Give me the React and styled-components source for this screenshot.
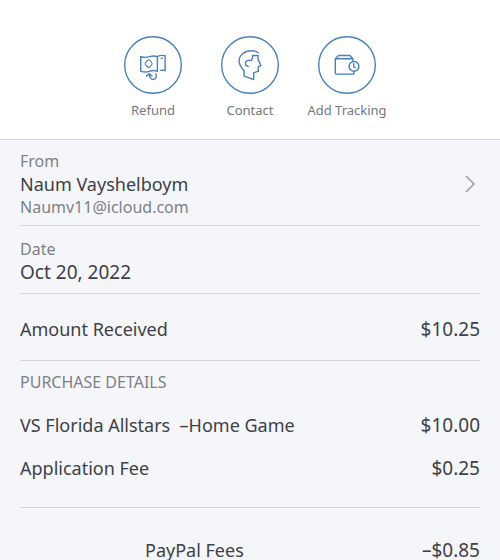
import styled, { createGlobalStyle } from "styled-components";

const GlobalStyle = createGlobalStyle`
  * {
    box-sizing: border-box;
  }

  body {
    margin: 0;
    background: #f5f6fa;
    color: #3e4147;
    font-family: "Noto Sans", "Open Sans", sans-serif;
    font-size: 18px;
    line-height: 24px;
  }
`;

const ActionBar = styled.header`
  display: flex;
  justify-content: center;
  padding: 36px 16px 19px;
  background: #fff;
  border-bottom: 1px solid #cfd3d8;
`;

const ActionButton = styled.button`
  display: flex;
  flex-direction: column;
  align-items: center;
  gap: 6px;
  width: 97px;
  padding: 0;
  border: none;
  background: none;
  color: #75787c;
  font: inherit;
  font-size: 13px;
  line-height: 20px;
  white-space: nowrap;
  cursor: pointer;
`;

const ActionIcon = styled.svg`
  width: 58px;
  height: 58px;
  fill: none;
  stroke: #4a80b8;
  stroke-width: 1.4;
  stroke-linejoin: round;
  stroke-linecap: round;
`;

const Details = styled.main`
  padding: 0 20px;
`;

const Section = styled.section`
  padding: ${({ $padding }) => $padding};
  border-bottom: ${({ $last }) => ($last ? "none" : "1px solid #d3d6db")};
`;

const ContactLink = styled.a`
  display: flex;
  align-items: center;
  justify-content: space-between;
  color: inherit;
  text-decoration: none;
`;

const Label = styled.div`
  color: #7e8185;
  font-size: 16px;
  line-height: 22px;
`;

const SectionTitle = styled.h2`
  margin: 0 0 20px;
  color: #7e8185;
  font-size: 16px;
  font-weight: 400;
  line-height: 22px;
`;

const Chevron = styled.svg`
  width: 20px;
  height: 20px;
  fill: none;
  stroke: #9b9da1;
  stroke-width: 1.5;
`;

const Items = styled.div`
  display: flex;
  flex-direction: column;
  gap: 19px;
`;

const Row = styled.div`
  display: flex;
  justify-content: space-between;
  white-space: pre-wrap;
`;

const FeeRow = styled(Row)`
  padding-left: 125px;
`;

const Figure = styled.span`
  font-size: 19px;
`;

function RefundIcon() {
  return (
    <ActionIcon viewBox="0 0 58 58" aria-hidden="true">
      <circle cx="29" cy="29" r="28.3" />
      <path d="M16.700 20.500c3 1.200 5.800 1.200 8.600.2s5.600-1 8.100 0v14.600c-2.700-1-5.400-1-8.100 0s-5.700 1-8.600-.2z" />
      <path
        d="M23.700 24.200q1-.8 2 0l2 2.300q.8 1.200 0 2.300l-2 2.200q-1 .8-2 0l-2.200-2.200q-.8-1.100 0-2.300z"
        strokeWidth="1.1"
      />
      <path d="M33.600 20.300c2.400-1.100 4.900-1.200 7.500-.6v15c-1.500-.5-2.900-.6-4.300-.3M37.300 22.300h.9" />
      <path d="M31.800 37.800c1.200 2.800.1 5.400-2.200 5.700-2.300.3-4.200-2-4.400-5.500M22.500 40.200l2.700-2.500 2.800 2.300" />
    </ActionIcon>
  );
}

function ContactIcon() {
  return (
    <ActionIcon viewBox="0 0 58 58" aria-hidden="true">
      <circle cx="29" cy="29" r="28.3" />
      <path d="M37.200 16.800c-2-1.500-4.200-2.200-6.800-2.100-7 .1-12.300 4.700-12.300 10.400 0 4 2.100 6.700 5 9.700v5.300l9.600 3.500v-6.900l4.600-1.300v-4.800l2.700-.9-2.900-6.300v-3.900h-5.600v2.500l-1.300 2.700c-2.700-1.200-5.800 0-5.800 2.500 0 1.700 1.100 2.900 2.900 3.200" />
    </ActionIcon>
  );
}

function TrackingIcon() {
  return (
    <ActionIcon viewBox="0 0 58 58" aria-hidden="true">
      <circle cx="29" cy="29" r="28.3" />
      <path d="M34.900 25v-2.200H17.300v14.200c0 .7.400 1.100 1.100 1.100h17.500v-2.300M17.300 22.800l3.300-3.300h11.400l2.900 3.300" />
      <circle cx="36" cy="30.400" r="4.900" />
      <path d="M35.700 27.800v3l1.300.9" />
    </ActionIcon>
  );
}

const actions = [
  { label: "Refund", Icon: RefundIcon },
  { label: "Contact", Icon: ContactIcon },
  { label: "Add Tracking", Icon: TrackingIcon },
];

const purchases = [
  { name: "VS Florida Allstars  –Home Game", amount: "$10.00" },
  { name: "Application Fee", amount: "$0.25" },
];

export default function App() {
  return (
    <>
      <GlobalStyle />
      <ActionBar>
        {actions.map(({ label, Icon }) => (
          <ActionButton key={label} type="button">
            <Icon />
            {label}
          </ActionButton>
        ))}
      </ActionBar>
      <Details>
        <Section $padding="10px 0 7px">
          <ContactLink href="#contact">
            <div>
              <Label>From</Label>
              <div>Naum Vayshelboym</div>
              <Label>Naumv11@icloud.com</Label>
            </div>
            <Chevron viewBox="0 0 20 20" aria-hidden="true">
              <path d="M6 2l8 8-8 8" />
            </Chevron>
          </ContactLink>
        </Section>
        <Section $padding="12px 0 9px">
          <Label>Date</Label>
          <div>
            <Figure>Oct 20, 2022</Figure>
          </div>
        </Section>
        <Section $padding="23px 0 19px">
          <Row>
            <span>Amount Received</span>
            <Figure>$10.25</Figure>
          </Row>
        </Section>
        <Section $padding="10px 0 27px">
          <SectionTitle>PURCHASE DETAILS</SectionTitle>
          <Items>
            {purchases.map(({ name, amount }) => (
              <Row key={name}>
                <span>{name}</span>
                <Figure>{amount}</Figure>
              </Row>
            ))}
          </Items>
        </Section>
        <Section $padding="30px 0 0" $last>
          <FeeRow>
            <span>PayPal Fees</span>
            <Figure>–$0.85</Figure>
          </FeeRow>
        </Section>
      </Details>
    </>
  );
}
